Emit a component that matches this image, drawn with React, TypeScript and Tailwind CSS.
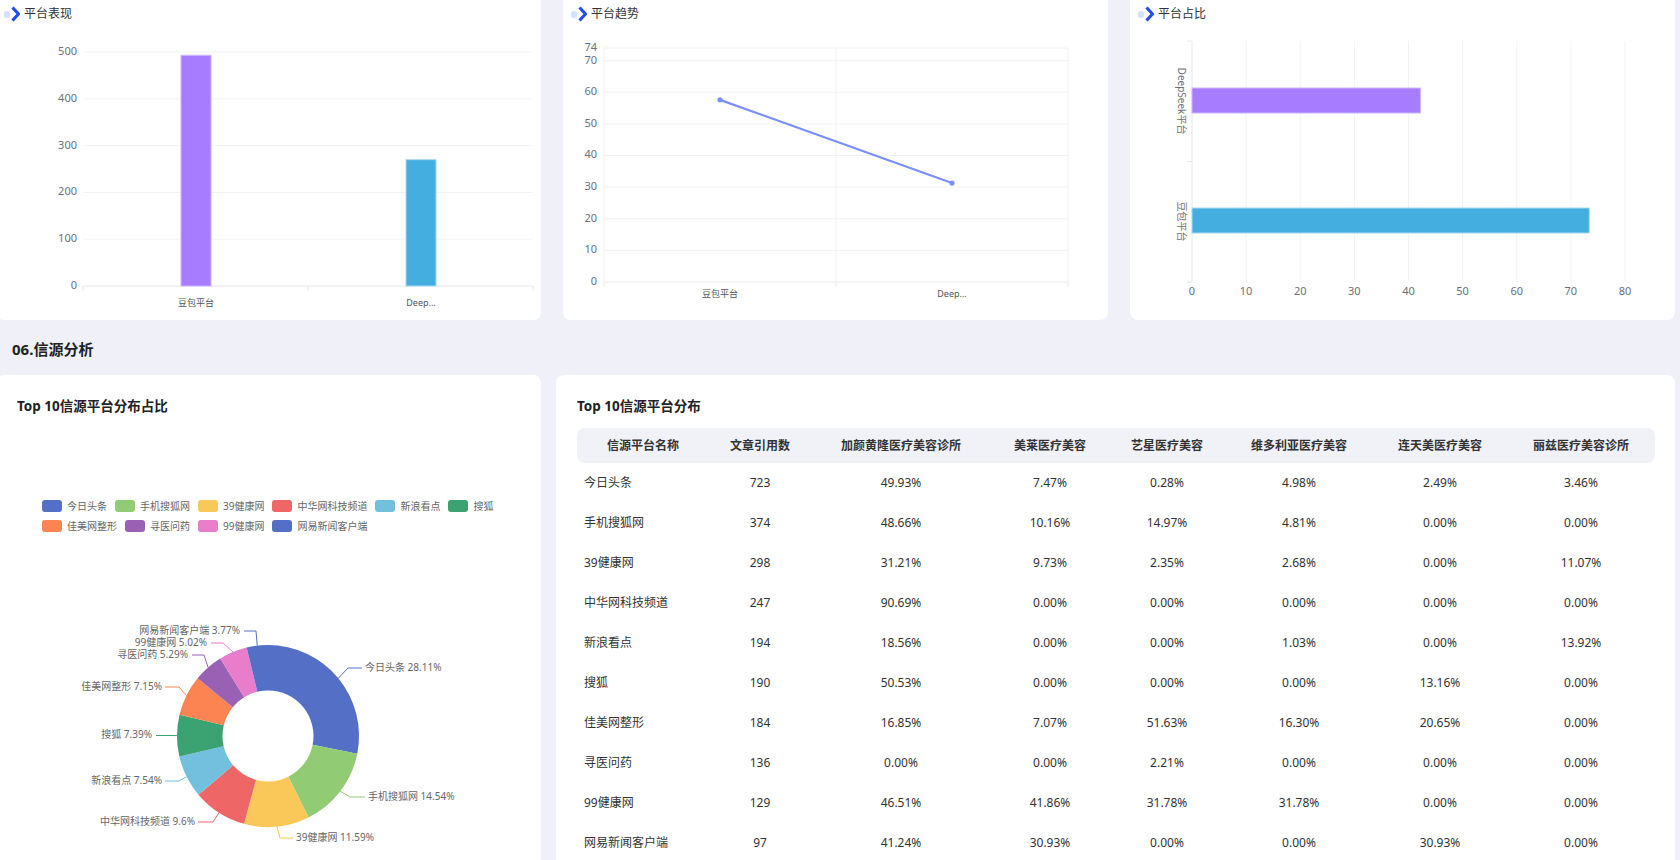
import React from 'react';

const TitleIcon = () => (
  <svg width="20" height="16" viewBox="0 0 20 16" className="shrink-0">
    <rect x="0" y="5" width="6" height="7" rx="2.5" fill="#d4e2ff" />
    <path d="M8.5 1.5 L14.5 8 L8.5 14.5" fill="none" stroke="#1f4ff0" strokeWidth="3.2" strokeLinejoin="round" />
  </svg>
);

const TopCard = ({ title, children }: { title: string; children: React.ReactNode }) => (
  <div className="bg-white rounded-lg h-[330px] flex flex-col overflow-hidden">
    <div className="h-[48px] flex items-center pl-[8px]">
      <TitleIcon />
      <span className="text-[12px] text-[#333]">{title}</span>
    </div>
    {children}
  </div>
);

const GRID = '#f1f2f5';
const AXIS_TEXT = '#6e7079';

// 平台表现: svg x = abs + 4, y = abs - 38
const BarChart = () => {
  const y0 = 248;
  const k = 0.468;
  const ticks = [0, 100, 200, 300, 400, 500];
  return (
    <svg width="545" height="282">
      {ticks.map((t) => (
        <g key={t}>
          <line x1="87" x2="537" y1={y0 - t * k} y2={y0 - t * k} stroke={t === 0 ? '#e6e8ee' : GRID} />
          <text x="81" y={y0 - t * k} textAnchor="end" dominantBaseline="middle" fontSize="11" fill={AXIS_TEXT}>
            {t}
          </text>
        </g>
      ))}
      {[87, 312, 537].map((x) => (
        <line key={x} x1={x} x2={x} y1={y0} y2={y0 + 5} stroke="#e6e8ee" />
      ))}
      <rect x="185" y={y0 - 493 * k} width="30" height={493 * k} fill="#a87cff" stroke="#cdb6ff" />
      <rect x="410" y={y0 - 270 * k} width="30" height={270 * k} fill="#45aee1" stroke="#a9d9f1" />
      <text x="200" y="266" textAnchor="middle" dominantBaseline="middle" fontSize="9" fill="#555">豆包平台</text>
      <text x="425" y="266" textAnchor="middle" dominantBaseline="middle" fontSize="9" fill="#555">Deep...</text>
    </svg>
  );
};

// 平台趋势: svg x = abs - 563, y = abs - 38
const LineChart = () => {
  const y0 = 244;
  const k = 3.162;
  const ticks = [0, 10, 20, 30, 40, 50, 60, 70];
  const p1 = { x: 157, y: y0 - 57.6 * k };
  const p2 = { x: 389, y: y0 - 31.3 * k };
  return (
    <svg width="545" height="282">
      {[...ticks, 74].map((t) => (
        <g key={t}>
          <line x1="41" x2="505" y1={y0 - t * k} y2={y0 - t * k} stroke={t === 0 ? '#e6e8ee' : GRID} />
          <text x="34" y={y0 - t * k} textAnchor="end" dominantBaseline="middle" fontSize="11" fill={AXIS_TEXT}>
            {t}
          </text>
        </g>
      ))}
      {[41, 273, 505].map((x) => (
        <g key={x}>
          <line x1={x} x2={x} y1={y0 - 74 * k} y2={y0} stroke={GRID} />
          <line x1={x} x2={x} y1={y0} y2={y0 + 5} stroke="#e6e8ee" />
        </g>
      ))}
      <line x1={p1.x} y1={p1.y} x2={p2.x} y2={p2.y} stroke="#7b90fd" strokeWidth="2.2" />
      <circle cx={p1.x} cy={p1.y} r="2.6" fill="#7b90fd" />
      <circle cx={p2.x} cy={p2.y} r="2.6" fill="#7b90fd" />
      <text x="157" y="257" textAnchor="middle" dominantBaseline="middle" fontSize="9" fill="#555">豆包平台</text>
      <text x="389" y="257" textAnchor="middle" dominantBaseline="middle" fontSize="9" fill="#555">Deep...</text>
    </svg>
  );
};

// 平台占比: svg x = abs - 1130, y = abs - 38
const HBarChart = () => {
  const x0 = 62;
  const k = 5.4125;
  const ticks = [0, 10, 20, 30, 40, 50, 60, 70, 80];
  return (
    <svg width="545" height="282">
      {ticks.map((t) => (
        <g key={t}>
          <line x1={x0 + t * k} x2={x0 + t * k} y1="3" y2="244" stroke={t === 0 ? '#e6e8ee' : GRID} />
          <text x={x0 + t * k} y="254" textAnchor="middle" dominantBaseline="middle" fontSize="11" fill={AXIS_TEXT}>
            {t}
          </text>
        </g>
      ))}
      {[3, 123.5, 244].map((y) => (
        <line key={y} x1={x0 - 5} x2={x0} y1={y} y2={y} stroke="#e6e8ee" />
      ))}
      <rect x={x0} y="50" width={42.2 * k} height="25" fill="#a87cff" stroke="#cdb6ff" />
      <rect x={x0} y="170" width={73.4 * k} height="25" fill="#45aee1" stroke="#a9d9f1" />
      <text x="51" y="63" transform="rotate(90 51 63)" textAnchor="middle" dominantBaseline="middle" fontSize="10" fill={AXIS_TEXT}>
        DeepSeek平台
      </text>
      <text x="51" y="183.5" transform="rotate(90 51 183.5)" textAnchor="middle" dominantBaseline="middle" fontSize="10" fill={AXIS_TEXT}>
        豆包平台
      </text>
    </svg>
  );
};

const sources = [
  { name: '今日头条', pct: 28.11, color: '#5470c6', elbow: [348, 668], end: [362, 668], tx: 365, anchor: 'start' },
  { name: '手机搜狐网', pct: 14.54, color: '#91cc75', elbow: [350, 797], end: [365, 797], tx: 368, anchor: 'start' },
  { name: '39健康网', pct: 11.59, color: '#fac858', elbow: [280, 838], end: [293, 838], tx: 296, anchor: 'start' },
  { name: '中华网科技频道', pct: 9.6, color: '#ee6666', elbow: [213, 822], end: [198, 822], tx: 195, anchor: 'end' },
  { name: '新浪看点', pct: 7.54, color: '#73c0de', elbow: [179, 781], end: [165, 781], tx: 162, anchor: 'end' },
  { name: '搜狐', pct: 7.39, color: '#3ba272', elbow: [168, 735.5], end: [156, 735.5], tx: 152, anchor: 'end' },
  { name: '佳美网整形', pct: 7.15, color: '#fc8452', elbow: [179, 687], end: [165, 687], tx: 162, anchor: 'end' },
  { name: '寻医问药', pct: 5.29, color: '#9a60b4', elbow: [204, 655], end: [192, 655], tx: 188, anchor: 'end' },
  { name: '99健康网', pct: 5.02, color: '#ea7ccc', elbow: [223, 643], end: [211, 643], tx: 207, anchor: 'end' },
  { name: '网易新闻客户端', pct: 3.77, color: '#5470c6', elbow: [256, 631], end: [244, 631], tx: 240, anchor: 'end' },
];

const Legend = () => (
  <div className="mt-[85px] ml-[46px] flex flex-col gap-[8px]">
    {[sources.slice(0, 6), sources.slice(6)].map((row, i) => (
      <div key={i} className="flex items-center gap-[8px] h-[12px]">
        {row.map((s) => (
          <div key={s.name} className="flex items-center gap-[5px]">
            <span className="w-[20px] h-[12px] rounded-[3px]" style={{ backgroundColor: s.color }} />
            <span className="text-[10px] leading-[12px] text-[#666]">{s.name}</span>
          </div>
        ))}
      </div>
    ))}
  </div>
);

// 饼图: svg x = abs + 4, y = abs - 532
const PieChart = () => {
  const cx = 268;
  const cy = 736;
  const R = 91;
  const r = 45.5;
  const sx = (x: number) => x + 4;
  const sy = (y: number) => y - 532;
  const pt = (rad: number, a: number) => [cx + rad * Math.sin(a), cy - rad * Math.cos(a)];
  let acc = 0;
  return (
    <svg width="545" height="340">
      {sources.map((s) => {
        const a0 = (acc / 100) * Math.PI * 2;
        acc += s.pct;
        const a1 = (acc / 100) * Math.PI * 2;
        const am = (a0 + a1) / 2;
        const large = a1 - a0 > Math.PI ? 1 : 0;
        const [x0, y0] = pt(R, a0);
        const [x1, y1] = pt(R, a1);
        const [x2, y2] = pt(r, a1);
        const [x3, y3] = pt(r, a0);
        const [lx, ly] = pt(R, am);
        const d = `M${sx(x0)} ${sy(y0)} A${R} ${R} 0 ${large} 1 ${sx(x1)} ${sy(y1)} L${sx(x2)} ${sy(y2)} A${r} ${r} 0 ${large} 0 ${sx(x3)} ${sy(y3)} Z`;
        return (
          <g key={s.name}>
            <path d={d} fill={s.color} />
            <polyline
              points={`${sx(lx)},${sy(ly)} ${sx(s.elbow[0])},${sy(s.elbow[1])} ${sx(s.end[0])},${sy(s.end[1])}`}
              fill="none"
              stroke={s.color}
              strokeWidth="1"
            />
            <text
              x={sx(s.tx)}
              y={sy(s.end[1])}
              textAnchor={s.anchor as 'start' | 'end'}
              dominantBaseline="middle"
              fontSize="10"
              fill="#666"
            >
              {s.name} {s.pct}%
            </text>
          </g>
        );
      })}
    </svg>
  );
};

const headers = ['信源平台名称', '文章引用数', '加颜黄隆医疗美容诊所', '美莱医疗美容', '艺星医疗美容', '维多利亚医疗美容', '连天美医疗美容', '丽兹医疗美容诊所'];
const colWidths = [132, 102, 180, 118, 116, 148, 134, 148];

const rows = [
  ['今日头条', '723', '49.93%', '7.47%', '0.28%', '4.98%', '2.49%', '3.46%'],
  ['手机搜狐网', '374', '48.66%', '10.16%', '14.97%', '4.81%', '0.00%', '0.00%'],
  ['39健康网', '298', '31.21%', '9.73%', '2.35%', '2.68%', '0.00%', '11.07%'],
  ['中华网科技频道', '247', '90.69%', '0.00%', '0.00%', '0.00%', '0.00%', '0.00%'],
  ['新浪看点', '194', '18.56%', '0.00%', '0.00%', '1.03%', '0.00%', '13.92%'],
  ['搜狐', '190', '50.53%', '0.00%', '0.00%', '0.00%', '13.16%', '0.00%'],
  ['佳美网整形', '184', '16.85%', '7.07%', '51.63%', '16.30%', '20.65%', '0.00%'],
  ['寻医问药', '136', '0.00%', '0.00%', '2.21%', '0.00%', '0.00%', '0.00%'],
  ['99健康网', '129', '46.51%', '41.86%', '31.78%', '31.78%', '0.00%', '0.00%'],
  ['网易新闻客户端', '97', '41.24%', '30.93%', '0.00%', '0.00%', '30.93%', '0.00%'],
];

export default function App() {
  return (
    <div className="w-[1680px] h-[860px] overflow-hidden bg-[#f0f0f9] font-['Noto_Sans','Noto_Sans_CJK_SC',sans-serif]">
      {/* 平台表现 / 趋势 / 占比 */}
      <div className="-mt-[10px] -ml-[4px] grid grid-cols-[545px_545px_545px] gap-x-[22px]">
        <TopCard title="平台表现">
          <BarChart />
        </TopCard>
        <TopCard title="平台趋势">
          <LineChart />
        </TopCard>
        <TopCard title="平台占比">
          <HBarChart />
        </TopCard>
      </div>

      <div className="h-[55px] pt-[3px] pl-[12px] flex items-center">
        <h2 className="text-[15px] font-bold text-[#222]">06.信源分析</h2>
      </div>

      <div className="-ml-[4px] grid grid-cols-[545px_1119px] gap-x-[15px]">
        <div className="bg-white rounded-lg h-[520px] overflow-hidden">
          <div className="pl-[21px] pt-[22px] text-[13.5px] leading-[18px] font-bold text-[#222]">
            Top 10信源平台分布占比
          </div>
          <Legend />
          <PieChart />
        </div>

        <div className="bg-white rounded-lg h-[520px] px-[21px] overflow-hidden">
          <div className="pt-[22px] text-[13.5px] leading-[18px] font-bold text-[#222]">Top 10信源平台分布</div>
          <table className="mt-[13px] w-[1078px] table-fixed border-separate border-spacing-0">
            <colgroup>
              {colWidths.map((w, i) => (
                <col key={i} style={{ width: w }} />
              ))}
            </colgroup>
            <thead>
              <tr>
                {headers.map((h, i) => (
                  <th
                    key={h}
                    className={`h-[35px] bg-[#f1f1f8] text-[12px] font-bold text-[#333] text-center ${
                      i === 0 ? 'rounded-l-[8px]' : ''
                    } ${i === headers.length - 1 ? 'rounded-r-[8px]' : ''}`}
                  >
                    {h}
                  </th>
                ))}
              </tr>
            </thead>
            <tbody>
              {rows.map((row) => (
                <tr key={row[0]}>
                  {row.map((c, i) => (
                    <td
                      key={i}
                      className={`h-[40px] text-[12px] text-[#333] ${i === 0 ? 'text-left pl-[7px]' : 'text-center'}`}
                    >
                      {c}
                    </td>
                  ))}
                </tr>
              ))}
            </tbody>
          </table>
        </div>
      </div>
    </div>
  );
}
